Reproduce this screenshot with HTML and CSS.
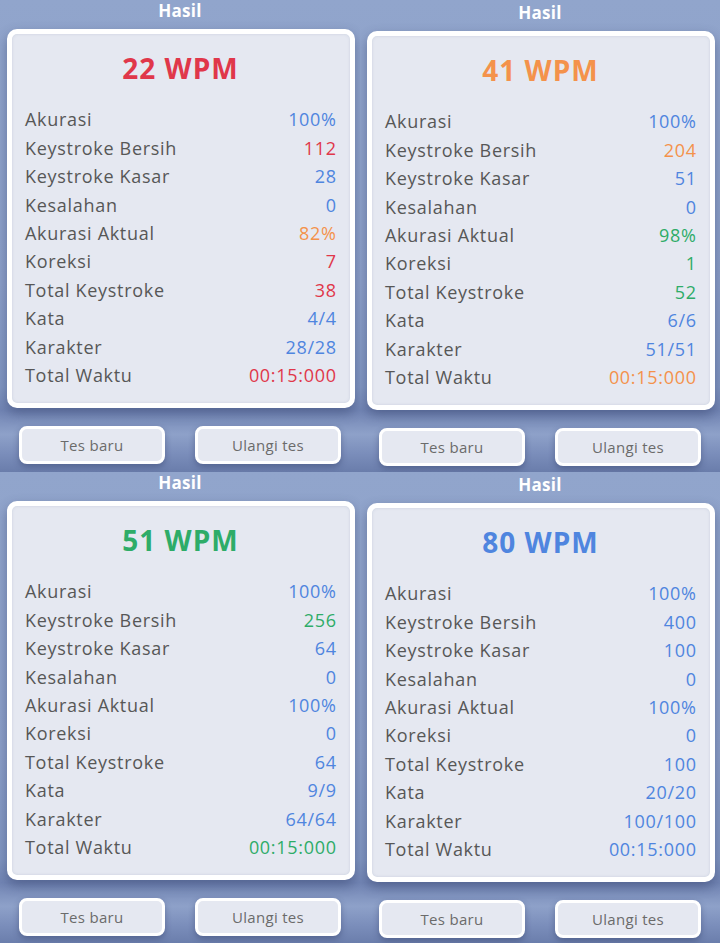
FILE: index.html
```html
<!DOCTYPE html>
<html lang="id">
<head>
<meta charset="utf-8">
<title>Hasil</title>
<link rel="stylesheet" href="styles.css">
</head>
<body>
<div class="grid">
  <section class="tile">
    <h2 class="title">Hasil</h2>
    <div class="card">
      <div class="wpm red">22 WPM</div>
      <ul class="stats">
        <li><span>Akurasi</span><b class="blue">100%</b></li>
        <li><span>Keystroke Bersih</span><b class="red">112</b></li>
        <li><span>Keystroke Kasar</span><b class="blue">28</b></li>
        <li><span>Kesalahan</span><b class="blue">0</b></li>
        <li><span>Akurasi Aktual</span><b class="orange">82%</b></li>
        <li><span>Koreksi</span><b class="red">7</b></li>
        <li><span>Total Keystroke</span><b class="red">38</b></li>
        <li><span>Kata</span><b class="blue">4/4</b></li>
        <li><span>Karakter</span><b class="blue">28/28</b></li>
        <li><span>Total Waktu</span><b class="red">00:15:000</b></li>
      </ul>
    </div>
    <div class="actions"><button class="btn">Tes baru</button><button class="btn">Ulangi tes</button></div>
  </section>
  <section class="tile shifted">
    <h2 class="title">Hasil</h2>
    <div class="card">
      <div class="wpm orange">41 WPM</div>
      <ul class="stats">
        <li><span>Akurasi</span><b class="blue">100%</b></li>
        <li><span>Keystroke Bersih</span><b class="orange">204</b></li>
        <li><span>Keystroke Kasar</span><b class="blue">51</b></li>
        <li><span>Kesalahan</span><b class="blue">0</b></li>
        <li><span>Akurasi Aktual</span><b class="green">98%</b></li>
        <li><span>Koreksi</span><b class="green">1</b></li>
        <li><span>Total Keystroke</span><b class="green">52</b></li>
        <li><span>Kata</span><b class="blue">6/6</b></li>
        <li><span>Karakter</span><b class="blue">51/51</b></li>
        <li><span>Total Waktu</span><b class="orange">00:15:000</b></li>
      </ul>
    </div>
    <div class="actions"><button class="btn">Tes baru</button><button class="btn">Ulangi tes</button></div>
  </section>
  <section class="tile">
    <h2 class="title">Hasil</h2>
    <div class="card">
      <div class="wpm green">51 WPM</div>
      <ul class="stats">
        <li><span>Akurasi</span><b class="blue">100%</b></li>
        <li><span>Keystroke Bersih</span><b class="green">256</b></li>
        <li><span>Keystroke Kasar</span><b class="blue">64</b></li>
        <li><span>Kesalahan</span><b class="blue">0</b></li>
        <li><span>Akurasi Aktual</span><b class="blue">100%</b></li>
        <li><span>Koreksi</span><b class="blue">0</b></li>
        <li><span>Total Keystroke</span><b class="blue">64</b></li>
        <li><span>Kata</span><b class="blue">9/9</b></li>
        <li><span>Karakter</span><b class="blue">64/64</b></li>
        <li><span>Total Waktu</span><b class="green">00:15:000</b></li>
      </ul>
    </div>
    <div class="actions"><button class="btn">Tes baru</button><button class="btn">Ulangi tes</button></div>
  </section>
  <section class="tile shifted">
    <h2 class="title">Hasil</h2>
    <div class="card">
      <div class="wpm blue">80 WPM</div>
      <ul class="stats">
        <li><span>Akurasi</span><b class="blue">100%</b></li>
        <li><span>Keystroke Bersih</span><b class="blue">400</b></li>
        <li><span>Keystroke Kasar</span><b class="blue">100</b></li>
        <li><span>Kesalahan</span><b class="blue">0</b></li>
        <li><span>Akurasi Aktual</span><b class="blue">100%</b></li>
        <li><span>Koreksi</span><b class="blue">0</b></li>
        <li><span>Total Keystroke</span><b class="blue">100</b></li>
        <li><span>Kata</span><b class="blue">20/20</b></li>
        <li><span>Karakter</span><b class="blue">100/100</b></li>
        <li><span>Total Waktu</span><b class="blue">00:15:000</b></li>
      </ul>
    </div>
    <div class="actions"><button class="btn">Tes baru</button><button class="btn">Ulangi tes</button></div>
  </section>
</div>
</body>
</html>
```
FILE: styles.css
```css
* { box-sizing: border-box; }
html, body {
  margin: 0;
  padding: 0;
  width: 720px;
  height: 943px;
  overflow: hidden;
  background: #8a9ec6;
  font-family: "Open Sans", "Noto Sans", sans-serif;
}
.grid {
  display: grid;
  grid-template-columns: 360px 360px;
  grid-template-rows: 472px 472px;
}
.tile {
  height: 472px;
  display: flex;
  flex-direction: column;
  background: linear-gradient(to bottom, #91a5cc 0%, #8c9fc8 60%, #8196c1 82%, #7184b3 87%, #8ea1c9 92%, #7b8ebb 96%, #6a7dab 100%);
  overflow: hidden;
}
.tile.shifted { padding-top: 2px; }
.title {
  margin: 0;
  height: 29px;
  padding-top: 1px;
  text-align: center;
  color: #fff;
  font-size: 17px;
  font-weight: 700;
  line-height: 20px;
  letter-spacing: 0.3px;
}
.card {
  margin: 0 5px 0 7px;
  height: 379px;
  border: 5px solid #fff;
  border-radius: 10px;
  background: #e5e8f1;
  box-shadow: 0 5px 12px rgba(45, 58, 100, 0.45), inset 0 0 3px rgba(150, 160, 190, 0.35);
  padding: 14px 14px 0 13px;
}
.wpm {
  text-align: center;
  font-size: 28px;
  font-weight: 700;
  line-height: 40px;
  letter-spacing: 1px;
}
.stats {
  list-style: none;
  margin: 17px 0 0 0;
  padding: 0;
}
.stats li {
  display: flex;
  justify-content: space-between;
  align-items: center;
  height: 28.45px;
  font-size: 18px;
  letter-spacing: 0.7px;
  color: #575757;
}
.stats b { font-weight: 400; margin-right: -0.7px; }
.red { color: #e0374a; }
.blue { color: #4f85df; }
.orange { color: #f4924b; }
.green { color: #2eac68; }
.actions {
  display: flex;
  gap: 30px;
  padding: 0 19px;
  margin-top: 18px;
}
.btn {
  flex: 1;
  height: 38px;
  border: 3px solid #fff;
  border-radius: 8px;
  background: #e5e8f1;
  box-shadow: 0 3px 6px rgba(40, 52, 95, 0.4);
  font-family: "Open Sans", "Noto Sans", sans-serif;
  font-size: 15px;
  letter-spacing: 0.3px;
  color: #6b6b6b;
  padding: 0;
}
```
